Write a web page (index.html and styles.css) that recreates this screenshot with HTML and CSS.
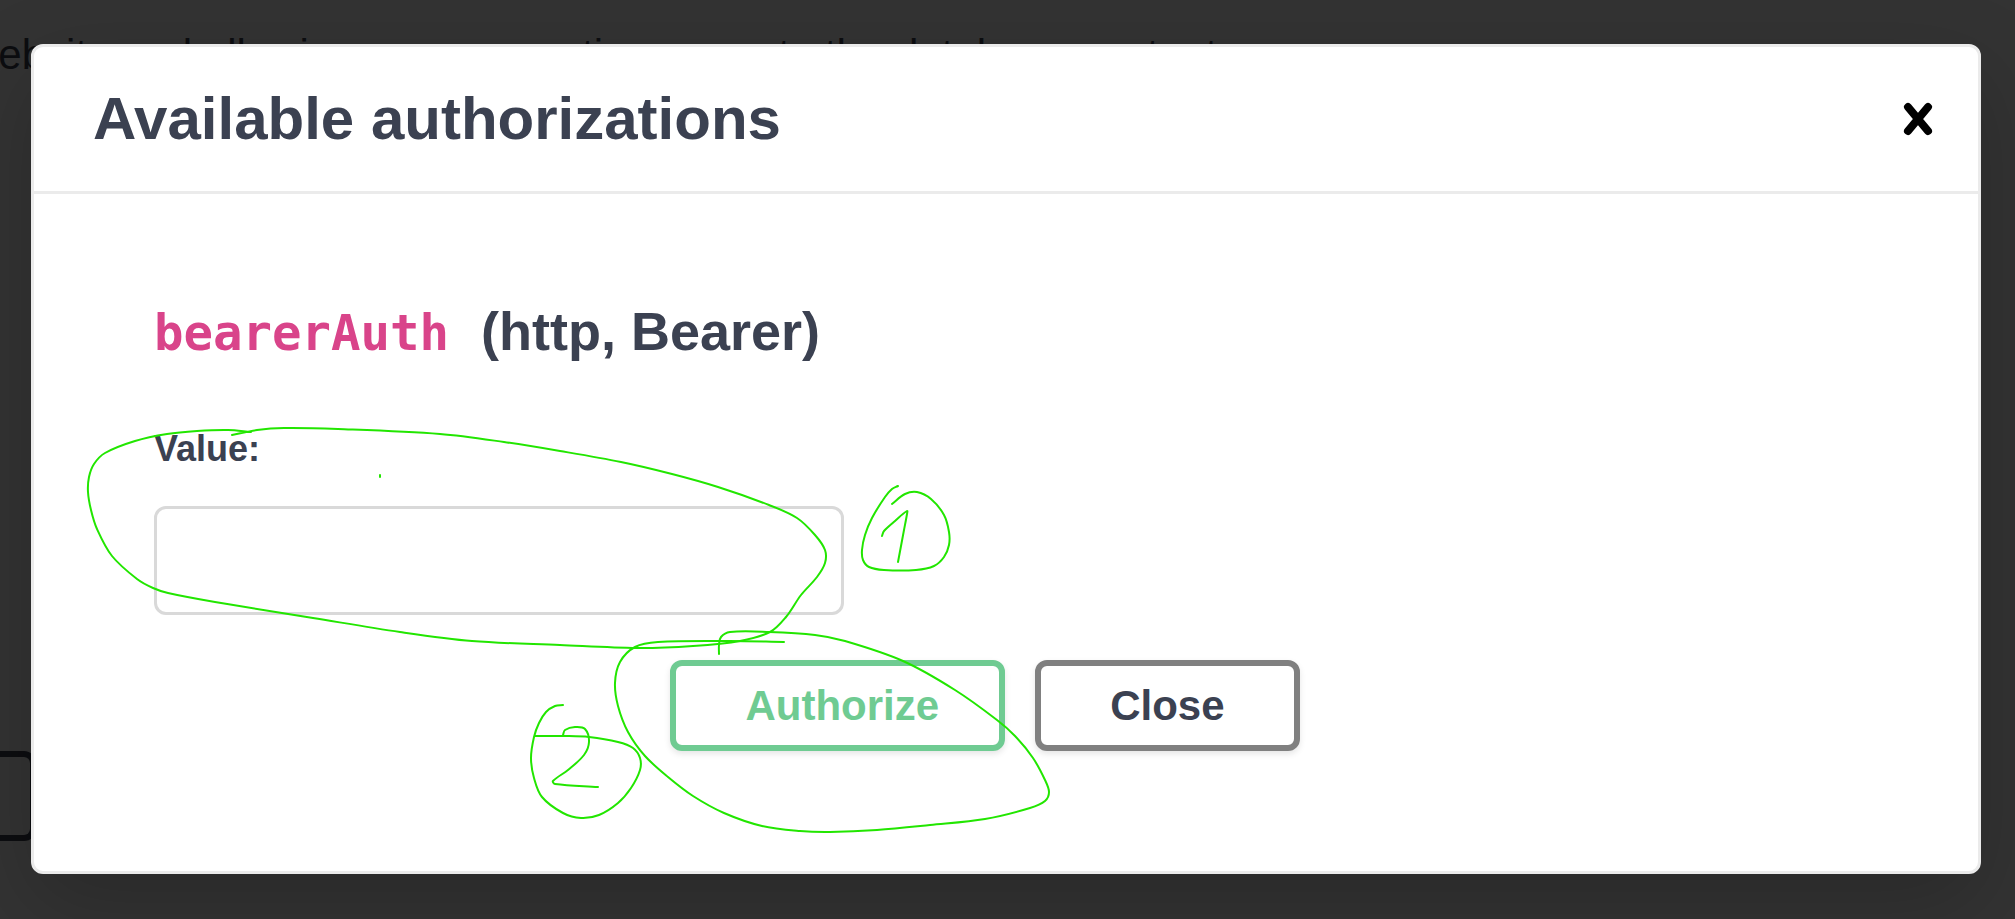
FILE: index.html
```html
<!DOCTYPE html>
<html lang="en">
<head>
<meta charset="utf-8">
<title>Available authorizations</title>
<link rel="stylesheet" href="styles.css">
</head>
<body>
<div class="page" aria-hidden="true">
  <p class="page-text">website and allowing more operations area to the database content</p>
  <div class="page-button"></div>
</div>
<div class="backdrop">
  <section class="modal" role="dialog" aria-labelledby="modal-title">
    <header class="modal-header">
      <h3 class="modal-title" id="modal-title">Available authorizations</h3>
      <button class="icon-button" type="button" aria-label="Close dialog">
        <svg class="icon" viewBox="0 0 30 34"><path d="M5 5L25 29M25 5L5 29"/></svg>
      </button>
    </header>
    <form class="modal-body">
      <h4 class="scheme"><code class="scheme-name">bearerAuth</code><span>(http, Bearer)</span></h4>
      <label class="label" for="auth-value">Value:</label>
      <input class="input" id="auth-value" type="text">
      <div class="actions">
        <button class="btn btn-authorize" type="submit">Authorize</button>
        <button class="btn" type="button">Close</button>
      </div>
    </form>
  </section>
  <svg class="ink" viewBox="0 0 2015 919" aria-hidden="true">
    <path data-points="232,435 257,430 284,428 338,429 440,434 504,442 560,451 621,462 672,474 718,487 769,505 797,518 815,535 825,550 825,563 817,577 801,595 786,617 770,632 740,641 693,646 637,648 560,645 472,641 400,632 313,618 215,602 168,593 153,588 137,579 112,556 97,529 91,510 88,492 89,477 94,464 105,453 135,441 167,434 197,431 228,430 251,432"/>
    <path data-points="898,486 892,489 885,497 872,518 865,535 862,550 863,560 869,567 884,570 916,570 934,566 944,557 949,545 949,532 944,515 931,499 917,492 905,494 892,504"/>
    <path data-points="882,536 884,531 895,521 907,511 907,514 904,530 898,562"/>
    <path data-points="563,705 555,706 546,712 539,723 534,737 531,758 534,778 542,797 563,813 581,818 599,815 618,803 631,788 640,770 640,758 633,748 618,742 589,737 565,736 535,736"/>
    <path data-points="563,735 565,730 575,727 585,729 589,742 584,755 568,770 553,781 555,784 598,787"/>
    <path data-points="784,642 730,641 658,642 635,647 620,662 615,683 618,706 628,732 645,756 668,777 693,796 724,813 762,826 800,831 830,832 877,830 930,825 985,819 1030,808 1045,801 1049,792 1045,780 1033,758 1015,736 997,720 955,690 903,661 845,641 815,635 769,632 730,632 721,637 719,645 719,654"/>
    <path d="M380 475V477"/>
  </svg>
</div>
<script src="ink.js"></script>
</body>
</html>
```
FILE: ink.js
```js
// Turns each list of pen points into one smooth curve that passes through all of them.
document.querySelectorAll('.ink path[data-points]').forEach(function (path) {
  var pts = path.dataset.points.split(' ').map(function (p) { return p.split(',').map(Number); });
  var d = 'M' + pts[0];
  for (var i = 0; i < pts.length - 1; i++) {
    var a = pts[Math.max(i - 1, 0)], b = pts[i], c = pts[i + 1], e = pts[Math.min(i + 2, pts.length - 1)];
    var len = Math.hypot(c[0] - b[0], c[1] - b[1]) / 3;
    var t1 = Math.hypot(c[0] - a[0], c[1] - a[1]) || 1;
    var t2 = Math.hypot(e[0] - b[0], e[1] - b[1]) || 1;
    d += 'C' + [
      b[0] + (c[0] - a[0]) / t1 * len, b[1] + (c[1] - a[1]) / t1 * len,
      c[0] - (e[0] - b[0]) / t2 * len, c[1] - (e[1] - b[1]) / t2 * len,
      c[0], c[1]
    ];
  }
  path.setAttribute('d', d);
});
```
FILE: styles.css
```css
* { box-sizing: border-box; }
body { margin: 0; min-height: 100vh; background: #333; color: #3b4151; font-family: "Liberation Sans", Arial, sans-serif; }
.page { position: absolute; inset: 0; overflow: hidden; }
.page-text { margin: 0 0 0 -32px; padding-top: 28px; color: #0c0d10; font-size: 42px; line-height: 54px; white-space: nowrap; }
.page-button { width: 36px; height: 90px; margin-top: 669px; border: 6px solid #0c0d10; border-left: 0; border-radius: 0 12px 12px 0; }
.backdrop { position: relative; min-height: 100vh; padding: 44px 34px 45px 31px; }
.modal { background: #fff; border: 3px solid #ebebeb; border-radius: 12px; box-shadow: 0 30px 90px rgba(0, 0, 0, .2); }
.modal-header { display: flex; align-items: center; justify-content: space-between; height: 147px; padding: 0 45px 0 59px; border-bottom: 3px solid #ebebeb; }
.modal-title { margin: 0; font-size: 60px; line-height: 68px; }
.icon-button { padding: 0; border: 0; background: none; display: flex; }
.icon { width: 30px; height: 34px; fill: none; stroke: #000; stroke-width: 8; stroke-linecap: round; }
.modal-body { display: flex; flex-direction: column; padding: 106px 120px 120px; }
.scheme { display: flex; align-items: baseline; gap: 32px; margin: 0; font-size: 54px; line-height: 62px; }
.scheme-name { color: #d9448a; font: bold 49px/62px "DejaVu Sans Mono", monospace; }
.label { margin-top: 63px; font-size: 36px; font-weight: bold; line-height: 42px; }
.input { width: 690px; max-width: 100%; height: 109px; margin-top: 36px; padding: 24px 30px; border: 3px solid #d9d9d9; border-radius: 12px; background: #fff; font: 42px "Liberation Sans", sans-serif; }
.actions { display: flex; justify-content: center; gap: 30px; margin-top: 45px; padding-right: 42px; }
.btn { padding: 15px 69px; border: 6px solid #808080; border-radius: 12px; background: #fff; box-shadow: 0 3px 6px rgba(0, 0, 0, .1); color: #3b4151; font: bold 42px/49px "Liberation Sans", Arial, sans-serif; }
.btn-authorize { padding: 15px 60px 15px 69px; border-color: #6fcb92; color: #6fcb92; }
.ink { position: absolute; inset: 0; width: 100%; pointer-events: none; fill: none; stroke: #22e600; stroke-width: 2; stroke-linecap: round; }
```
